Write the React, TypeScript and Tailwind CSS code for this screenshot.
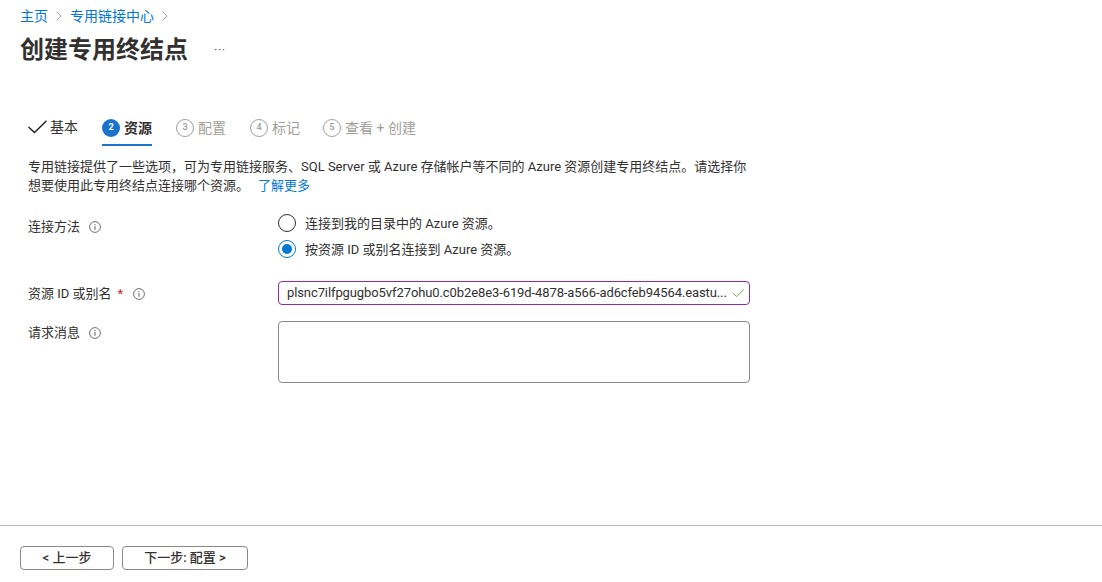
import { Check, ChevronRight } from 'lucide-react';

const font = { fontFamily: 'Roboto, "Noto Sans CJK SC", sans-serif' };

function Info() {
  return (
    <svg width="12" height="12" viewBox="0 0 12 12" fill="none" className="shrink-0">
      <circle cx="6" cy="6" r="5.4" stroke="#605e5c" strokeWidth="0.9" />
      <rect x="5.5" y="5" width="1" height="3.8" fill="#605e5c" />
      <rect x="5.5" y="3" width="1" height="1" fill="#605e5c" />
    </svg>
  );
}

function Step({ n, label }: { n: number; label: string }) {
  return (
    <div className="flex items-center gap-1 text-[#a19f9d]">
      <span className="w-[18px] h-[18px] rounded-full border border-[#a19f9d] flex items-center justify-center text-[9px] font-semibold">{n}</span>
      <span className="text-sm">{label}</span>
    </div>
  );
}

function Radio({ on, label }: { on?: boolean; label: string }) {
  return (
    <div className="flex items-center gap-[9px] h-[18px]">
      <span className={`w-[18px] h-[18px] rounded-full border flex items-center justify-center ${on ? 'border-[#0078d4]' : 'border-[#323130]'}`}>
        {on && <span className="w-2.5 h-2.5 rounded-full bg-[#0078d4]" />}
      </span>
      <span className="text-[13px] text-[#323130] pt-0.5">{label}</span>
    </div>
  );
}

export default function App() {
  return (
    <div className="w-[1102px] h-[582px] overflow-hidden bg-white flex flex-col" style={font}>
      <div className="flex-1 pl-5">
        <div className="flex items-center h-[18px] mt-[7px] text-sm text-[#0078d4]">
          <span>主页</span>
          <ChevronRight className="w-4 h-4 text-[#8a8886] mx-[3px]" strokeWidth={1.2} />
          <span>专用链接中心</span>
          <ChevronRight className="w-4 h-4 text-[#8a8886] ml-[3px]" strokeWidth={1.2} />
        </div>
        <div className="flex items-center mt-2 h-[34px]">
          <h1 className="text-2xl font-semibold text-[#323130] leading-[34px]">创建专用终结点</h1>
          <span className="ml-[26px] text-[13px] text-[#605e5c] tracking-[0.5px]">···</span>
        </div>

        <div className="flex items-start mt-12 ml-2 h-[31px]">
          <div className="flex items-center gap-[3px] h-[18px] mt-[3px] text-[#323130]">
            <svg width="19" height="14" viewBox="0 0 19 14" fill="none" className="shrink-0">
              <path d="M0.5 7 L6.5 12.5 L18.5 0.8" stroke="#1b1a19" strokeWidth="1.3" />
            </svg>
            <span className="text-sm">基本</span>
          </div>
          <div className="ml-6 w-[50px] h-[31px] pt-[3px] border-b-2 border-[#1b74cc]">
            <div className="flex items-center gap-1">
              <span className="w-[18px] h-[18px] rounded-full bg-[#1b74cc] text-white flex items-center justify-center text-[9px] font-bold">2</span>
              <span className="text-sm font-semibold text-[#323130] whitespace-nowrap">资源</span>
            </div>
          </div>
          <div className="flex items-center gap-6 ml-6 mt-[3px]">
            <Step n={3} label="配置" />
            <Step n={4} label="标记" />
            <div className="-ml-px"><Step n={5} label="查看 + 创建" /></div>
          </div>
        </div>

        <div className="ml-2 mt-3 text-[13px] leading-[18px] text-[#323130] whitespace-nowrap">
          <div>专用链接提供了一些选项，可为专用链接服务、SQL Server 或 Azure 存储帐户等不同的 Azure 资源创建专用终结点。请选择你</div>
          <div className="flex mt-px -mb-px">
            <span>想要使用此专用终结点连接哪个资源。</span>
            <a className="ml-[9px] text-[#0078d4]">了解更多</a>
          </div>
        </div>

        <div className="ml-2 mt-5 grid grid-cols-[250px_472px]">
          <div className="flex items-center gap-[9px] h-[18px] mt-1 text-[13px] text-[#323130]">
            连接方法 <Info />
          </div>
          <div className="flex flex-col gap-2">
            <Radio label="连接到我的目录中的 Azure 资源。" />
            <Radio on label="按资源 ID 或别名连接到 Azure 资源。" />
          </div>

          <div className="flex items-center h-[18px] mt-[27px] -mb-px text-[13px] text-[#323130]">
            资源 ID 或别名<span className="text-[#c4262c] ml-[6px]">*</span>
            <span className="ml-[10px]"><Info /></span>
          </div>
          <div className="mt-[23px] h-6 w-[472px] rounded-sm border border-[#8a2da5] flex items-center pl-2 pr-[3px] text-[13px] text-[#323130]">
            <span className="flex-1 whitespace-nowrap tracking-[-0.1px]">plsnc7ilfpgugbo5vf27ohu0.c0b2e8e3-619d-4878-a566-ad6cfeb94564.eastu...</span>
            <Check className="w-[15px] h-[15px] text-[#6bb33f] shrink-0" strokeWidth={1.6} />
          </div>

          <div className="flex items-center gap-[9px] h-[18px] mt-[19px] text-[13px] text-[#323130]">
            请求消息 <Info />
          </div>
          <div className="mt-4 h-[62px] w-[472px] rounded-sm border border-[#8a8886]" />
        </div>
      </div>

      <div className="h-[57px] border-t border-[#b9b9b9] pl-5 pt-5 flex items-start gap-2 text-[13px] font-medium text-[#323130]">
        <button className="w-[94px] h-6 rounded-sm border border-[#8a8886]">&lt; 上一步</button>
        <button className="w-[126px] h-6 rounded-sm border border-[#8a8886]">下一步: 配置 &gt;</button>
      </div>
    </div>
  );
}
